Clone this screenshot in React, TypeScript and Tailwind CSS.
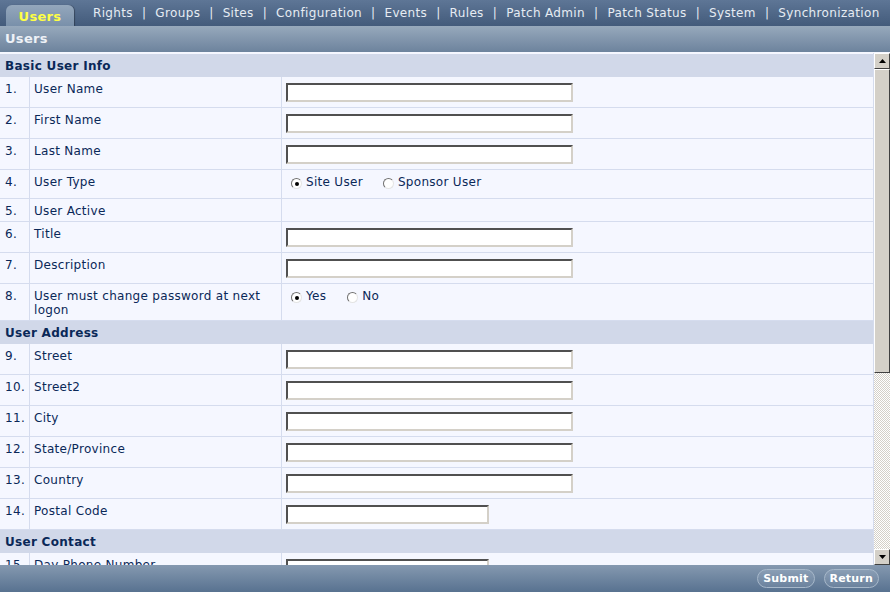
import React from 'react'

type Row =
  | { kind: 'header'; title: string }
  | { kind: 'input'; n: number; label: string; width?: 'long' | 'short' }
  | { kind: 'radio'; n: number; label: string; options: string[]; extraLine?: boolean }
  | { kind: 'empty'; n: number; label: string }

const rows: Row[] = [
  { kind: 'header', title: 'Basic User Info' },
  { kind: 'input', n: 1, label: 'User Name' },
  { kind: 'input', n: 2, label: 'First Name' },
  { kind: 'input', n: 3, label: 'Last Name' },
  { kind: 'radio', n: 4, label: 'User Type', options: ['Site User', 'Sponsor User'] },
  { kind: 'empty', n: 5, label: 'User Active' },
  { kind: 'input', n: 6, label: 'Title' },
  { kind: 'input', n: 7, label: 'Description' },
  { kind: 'radio', n: 8, label: 'User must change password at next logon', options: ['Yes', 'No'], extraLine: true },
  { kind: 'header', title: 'User Address' },
  { kind: 'input', n: 9, label: 'Street' },
  { kind: 'input', n: 10, label: 'Street2' },
  { kind: 'input', n: 11, label: 'City' },
  { kind: 'input', n: 12, label: 'State/Province' },
  { kind: 'input', n: 13, label: 'Country' },
  { kind: 'input', n: 14, label: 'Postal Code', width: 'short' },
  { kind: 'header', title: 'User Contact' },
  { kind: 'input', n: 15, label: 'Day Phone Number', width: 'short' },
]

const navItems = ['Rights', 'Groups', 'Sites', 'Configuration', 'Events', 'Rules', 'Patch Admin', 'Patch Status', 'System', 'Synchronization']

function Radio({ checked }: { checked?: boolean }) {
  return (
    <span className="mt-[3px] flex h-[11px] w-[11px] shrink-0 items-center justify-center rounded-full border border-t-[#707070] border-l-[#707070] border-b-[#e4e4e4] border-r-[#e4e4e4] bg-white">
      {checked && <span className="h-[4px] w-[4px] rounded-full bg-black"></span>}
    </span>
  )
}

function TextBox({ short }: { short?: boolean }) {
  return (
    <div
      className={`${short ? 'w-[203px]' : 'w-[287px]'} h-[19px] border-2 border-t-[#505050] border-l-[#505050] border-b-[#d4d0c8] border-r-[#d4d0c8] bg-white`}
    ></div>
  )
}

function FormRow({ row }: { row: Row }) {
  if (row.kind === 'header') {
    return (
      <div className="h-[23px] bg-[#d1d8e9] pl-[5px] pt-[5px] text-[12px] font-bold leading-[14px] text-[#0a2858]">
        {row.title}
      </div>
    )
  }
  const h = row.kind === 'input' ? 'h-[31px]' : row.kind === 'empty' ? 'h-[23px]' : row.extraLine ? 'h-[37px]' : 'h-[29px]'
  return (
    <div className={`grid grid-cols-[30px_252px_1fr] border-b border-[#d5dcee] ${h}`}>
      <div className="border-r border-[#d5dcee] pl-[5px] pt-[5px]">{row.n}.</div>
      <div className="border-r border-[#d5dcee] pl-[4px] pr-[6px] pt-[5px]">{row.label}</div>
      {row.kind === 'input' && (
        <div className="pl-[4px] pt-[6px]">
          <TextBox short={row.width === 'short'} />
        </div>
      )}
      {row.kind === 'radio' && (
        <div className="flex pl-[9px] pt-[5px]">
          {row.options.map((o, i) => (
            <label key={o} className={`flex gap-[4px] ${i === 0 ? (row.extraLine ? 'mr-[21px]' : 'mr-[20px]') : ''}`}>
              <Radio checked={i === 0} />
              <span>{o}</span>
            </label>
          ))}
        </div>
      )}
      {row.kind === 'empty' && <div></div>}
    </div>
  )
}

function Scrollbar() {
  return (
    <div className="flex w-[16px] flex-col bg-[#d4d0c8]">
      <div className="flex h-[16px] items-center justify-center border border-t-white border-l-white border-b-[#404040] border-r-[#404040] bg-[#d4d0c8]">
        <svg width="7" height="4" viewBox="0 0 7 4"><path d="M3.5 0L7 4H0z" fill="#000" /></svg>
      </div>
      <div className="h-[304px] border border-t-white border-l-white border-b-[#404040] border-r-[#404040] bg-[#d4d0c8]"></div>
      <div className="flex-1 bg-[conic-gradient(#d4d0c8_25%,#ffffff_0_50%,#d4d0c8_0_75%,#ffffff_0)] bg-[length:2px_2px]"></div>
      <div className="flex h-[16px] items-center justify-center border border-t-white border-l-white border-b-[#404040] border-r-[#404040] bg-[#d4d0c8]">
        <svg width="7" height="4" viewBox="0 0 7 4"><path d="M0 0H7L3.5 4z" fill="#000" /></svg>
      </div>
    </div>
  )
}

export default function App() {
  return (
    <div className="flex h-[592px] w-[890px] flex-col overflow-hidden font-['DejaVu_Sans',Verdana,sans-serif] text-[12px] leading-[14px] tracking-[0.3px] text-[#0a2858]">
      {/* Top nav */}
      <div className="flex h-[26px] items-end bg-gradient-to-b from-[#5e7696] to-[#435b7b] pl-[6px]">
        <div className="flex h-[21px] w-[68px] items-center justify-center rounded-t-[6px] bg-gradient-to-b from-[#94a7bc] to-[#7990aa] pt-[2px] text-[13px] font-bold text-[#ffff44] shadow-[1px_0_1px_rgba(0,0,0,0.3)]">
          Users
        </div>
        <div className="flex h-[26px] items-center pb-[1px] pl-[19px] text-[12px] tracking-[0.35px] text-[#e6ecf3]">
          {navItems.map((item, i) => (
            <React.Fragment key={item}>
              {i > 0 && <span className="mx-[9px]">|</span>}
              <span>{item}</span>
            </React.Fragment>
          ))}
        </div>
      </div>

      {/* Title bar */}
      <div className="flex h-[26px] items-center bg-gradient-to-b from-[#97a9bc] to-[#6d839d] pl-[5px] text-[13px] font-bold tracking-[0.3px] text-[#eef2f7]">
        Users
      </div>

      {/* Form */}
      <div className="flex min-h-0 flex-1 pt-[1px] bg-[#f5f7ff]">
        <div className="min-h-0 flex-1 overflow-hidden border-r border-[#d5dcee] pt-[1px]">
          {rows.map((r, i) => (
            <FormRow key={i} row={r} />
          ))}
        </div>
        <Scrollbar />
      </div>

      {/* Footer */}
      <div className="flex h-[27px] items-center justify-end gap-[9px] bg-gradient-to-b from-[#8599b0] to-[#587290] pr-[11px]">
        {['Submit', 'Return'].map((b) => (
          <button
            key={b}
            className="h-[19px] rounded-full border border-[#a7b8ca] bg-gradient-to-b from-[#8a9eb5] to-[#6c839e] px-[5px] text-[11px] font-bold leading-[16px] tracking-[0.2px] text-white"
          >
            {b}
          </button>
        ))}
      </div>
    </div>
  )
}
